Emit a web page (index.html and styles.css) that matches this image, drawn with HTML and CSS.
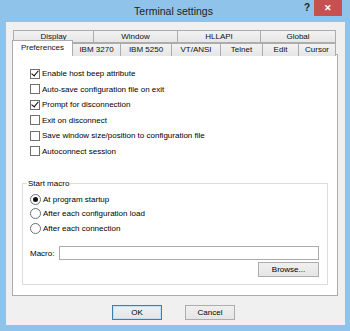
FILE: index.html
```html
<!DOCTYPE html>
<html lang="en">
<head>
    <meta charset="UTF-8">
    <title>Terminal settings</title>
    <link rel="stylesheet" href="styles.css">
</head>
<body>

<div class="window">
    <div class="titlebar">
        <span class="title">Terminal settings</span>
        <span class="help">?</span>
        <span class="close">&#x2715;</span>
    </div>

    <div class="client">
        <div class="tabs">
            <div class="tabrow back">
                <span class="tab">Display</span>
                <span class="tab">Window</span>
                <span class="tab">HLLAPI</span>
                <span class="tab">Global</span>
            </div>
            <div class="tabrow front">
                <span class="tab selected">Preferences</span>
                <span class="tab">IBM 3270</span>
                <span class="tab">IBM 5250</span>
                <span class="tab">VT/ANSI</span>
                <span class="tab">Telnet</span>
                <span class="tab">Edit</span>
                <span class="tab">Cursor</span>
            </div>
        </div>

        <div class="page">
            <div class="checks">
                <label class="check"><span class="box checked"></span>Enable host beep attribute</label>
                <label class="check"><span class="box"></span>Auto-save configuration file on exit</label>
                <label class="check"><span class="box checked"></span>Prompt for disconnection</label>
                <label class="check"><span class="box"></span>Exit on disconnect</label>
                <label class="check"><span class="box"></span>Save window size/position to configuration file</label>
                <label class="check"><span class="box"></span>Autoconnect session</label>
            </div>

            <div class="group">
                <span class="group-label">Start macro</span>
                <div class="radios">
                    <label class="check"><span class="radio on"></span>At program startup</label>
                    <label class="check"><span class="radio"></span>After each configuration load</label>
                    <label class="check"><span class="radio"></span>After each connection</label>
                </div>

                <div class="macro">
                    <span>Macro:</span>
                    <span class="field"></span>
                </div>
                <div class="browse-row">
                    <span class="button browse">Browse...</span>
                </div>
            </div>
        </div>

        <div class="buttons">
            <span class="button default">OK</span>
            <span class="button">Cancel</span>
        </div>
    </div>
</div>

</body>
</html>
```

FILE: styles.css
```css
body {
    margin: 0;
    font-family: "Liberation Sans", Arial, sans-serif;
    font-size: 8px;
    color: #000000;
}

.window {
    width: 350px;
    height: 331px;
    background-color: #8fc3ea;
    display: flex;
    flex-direction: column;
    box-sizing: border-box;
    padding: 0 5px 6px 6px;
}

.titlebar {
    height: 22px;
    position: relative;
    flex: none;
}

.title {
    display: block;
    text-align: center;
    font-size: 10.5px;
    line-height: 22px;
    color: #222222;
    padding-right: 4px;
}

.help {
    position: absolute;
    left: 298px;
    top: 2px;
    font-size: 10px;
    font-weight: bold;
    color: #222222;
}

.close {
    position: absolute;
    left: 308px;
    top: 0;
    width: 28px;
    height: 16px;
    background-color: #c75050;
    color: #ffffff;
    font-size: 9px;
    font-weight: bold;
    text-align: center;
    line-height: 16px;
}

.client {
    flex: 1;
    background-color: #f0f0f0;
    padding: 8px 7px 0 6px;
    display: flex;
    flex-direction: column;
}

.tabs {
    height: 24px;
    display: flex;
    flex-direction: column;
}

.tabrow {
    display: grid;
    height: 12px;
}

.tabrow.back {
    grid-template-columns: 80px 84px 83px 76px;
    margin-left: 1px;
}

.tabrow.front {
    grid-template-columns: 60px 48px 51px 49px 42px 36px 38px;
    position: relative;
    z-index: 1;
}

.tab {
    background: linear-gradient(#f2f2f2, #e6e6e6);
    border: 1px solid #acacac;
    border-right: none;
    text-align: center;
    line-height: 11px;
    color: #111111;
}

.tab:last-child {
    border-right: 1px solid #acacac;
}

.front .tab {
    margin-top: 1px;
    border-bottom: none;
}

.front .tab.selected {
    background: #ffffff;
    margin-top: -2px;
    height: 15px;
    border-right: 1px solid #acacac;
    margin-right: -1px;
    position: relative;
    z-index: 2;
    line-height: 13px;
}

.page {
    height: 242px;
    background-color: #ffffff;
    border: 1px solid #acacac;
    box-sizing: border-box;
    padding: 12.5px 9px 0 17px;
}

.checks {
    display: flex;
    flex-direction: column;
    gap: 3.5px;
}

.check {
    display: flex;
    align-items: center;
    height: 12px;
    gap: 2px;
    white-space: nowrap;
}

.box {
    width: 8px;
    height: 8px;
    border: 1px solid #707070;
    background: #ffffff;
    position: relative;
    flex: none;
}

.box.checked::after {
    content: "";
    position: absolute;
    left: 2px;
    top: -0.5px;
    width: 3px;
    height: 6px;
    border-right: 1.6px solid #000000;
    border-bottom: 1.6px solid #000000;
    transform: rotate(40deg);
}

.group {
    position: relative;
    margin: 26px 0 0 -8px;
    border: 1px solid #dcdcdc;
    padding: 9px 8px 7px 7px;
    display: flex;
    flex-direction: column;
}

.group-label {
    position: absolute;
    top: -6px;
    left: 4px;
    padding: 0 1px;
    background: #ffffff;
    line-height: 11px;
}

.radios {
    display: flex;
    flex-direction: column;
    gap: 2.5px;
}

.radio {
    width: 9px;
    height: 9px;
    border: 1px solid #707070;
    border-radius: 50%;
    background: #ffffff;
    position: relative;
    flex: none;
}

.radio.on::after {
    content: "";
    position: absolute;
    left: 2px;
    top: 2px;
    width: 5px;
    height: 5px;
    border-radius: 50%;
    background: #111111;
}

.macro {
    display: flex;
    align-items: center;
    gap: 4.5px;
    margin-top: 12px;
}

.field {
    flex: 1;
    height: 12px;
    border: 1px solid #ababab;
    background: #ffffff;
}

.browse-row {
    display: flex;
    justify-content: flex-end;
    margin-top: 2px;
}

.button {
    display: inline-block;
    box-sizing: border-box;
    width: 50px;
    height: 15px;
    border: 1px solid #adadad;
    background: linear-gradient(#f0f0f0, #e5e5e5);
    text-align: center;
    line-height: 13px;
}

.browse {
    width: 61px;
}

.buttons {
    display: flex;
    justify-content: center;
    gap: 23px;
    margin-top: 9px;
    padding-right: 3px;
}

.button.default {
    border-color: #3c7fb1;
    box-shadow: inset 0 0 0 1px #bfe0f7;
}
```
